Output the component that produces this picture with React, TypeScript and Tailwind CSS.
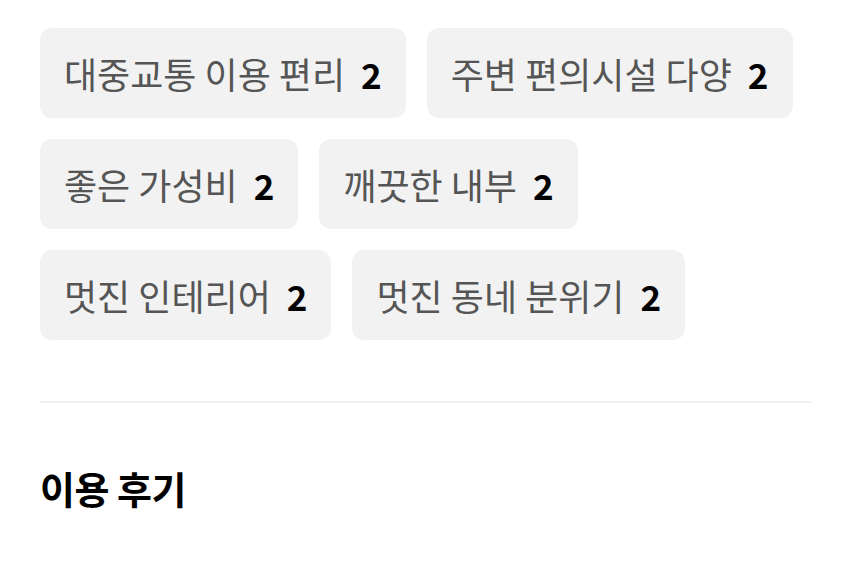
import React from 'react';

const keywords = [
  { label: '대중교통 이용 편리', count: 2 },
  { label: '주변 편의시설 다양', count: 2 },
  { label: '좋은 가성비', count: 2 },
  { label: '깨끗한 내부', count: 2 },
  { label: '멋진 인테리어', count: 2 },
  { label: '멋진 동네 분위기', count: 2 },
];

const App = () => {
  return (
    <div
      className="min-h-screen bg-white px-10 pt-7"
      style={{ fontFamily: '"Noto Sans CJK KR", "Noto Sans", sans-serif' }}
    >
      <div className="flex flex-wrap gap-x-[21px] gap-y-[21px] max-w-[772px]">
        {keywords.map((k) => (
          <div
            key={k.label}
            className="h-[90px] flex items-center rounded-xl bg-[#f2f2f2] px-6"
          >
            <span className="text-[36px] leading-none text-[#555555]">
              {k.label}
            </span>
            <span className="ml-4 text-[35px] leading-none font-bold text-black">
              {k.count}
            </span>
          </div>
        ))}
      </div>

      <div className="mt-[61px] h-[2px] bg-[#f1f1f1] w-[772px]" />

      <h2 className="mt-[66px] text-[38px] leading-none font-bold text-black tracking-[-0.5px]">
        이용 후기
      </h2>
    </div>
  );
};

export default App;
